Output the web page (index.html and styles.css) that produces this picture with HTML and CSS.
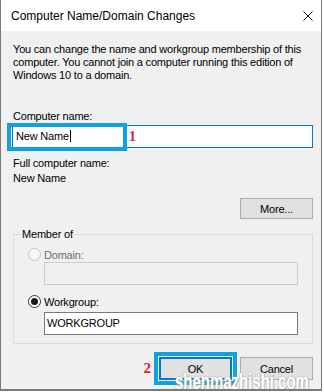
FILE: index.html
```html
<!DOCTYPE html>
<html lang="en">
<head>
    <meta charset="UTF-8">
    <title>Computer Name/Domain Changes</title>
    <link rel="stylesheet" href="styles.css">
</head>
<body>

    <div class="dialog">
        <div class="titlebar">
            <span class="title">Computer Name/Domain Changes</span>
            <svg class="close" width="10" height="10" viewBox="0 0 10 10">
                <path d="M0.5 0.5 L9.5 9.5 M9.5 0.5 L0.5 9.5" stroke="#111" stroke-width="1" fill="none"/>
            </svg>
        </div>

        <div class="content">
            <p class="intro">You can change the name and workgroup membership of this computer. You cannot join a computer running this edition of Windows 10 to a domain.</p>

            <div class="field-label">Computer name:</div>
            <div class="name-field">
                <div class="textbox active">New Name<span class="caret"></span></div>
                <span class="mark mark-name"></span>
                <span class="step step-1">1</span>
            </div>

            <div class="info-label">Full computer name:</div>
            <div class="info-value">New Name</div>

            <div class="more-row">
                <button class="btn">More...</button>
            </div>

            <fieldset class="member">
                <legend>Member of</legend>
                <div class="group-body">
                    <div class="radio-row disabled"><span class="radio"></span>Domain:</div>
                    <div class="textbox sub off"></div>
                    <div class="radio-row workgroup"><span class="radio checked"></span>Workgroup:</div>
                    <div class="textbox sub">WORKGROUP</div>
                </div>
            </fieldset>

            <div class="actions">
                <span class="step step-2">2</span>
                <button class="btn default">OK</button>
                <button class="btn">Cancel</button>
            </div>
        </div>

        <div class="watermark">shenmazhishi.com</div>
    </div>

</body>
</html>
```

FILE: styles.css
```css
body {
    margin: 0;
    background: #fff;
    font-family: "Liberation Sans", Arial, sans-serif;
    font-size: 12px;
    color: #000;
}

.dialog {
    position: relative;
    box-sizing: border-box;
    width: 322px;
    height: 391px;
    background: #f0f0f0;
    border: 1px solid #7a7a7a;
    border-top: none;
    border-bottom-width: 2px;
    overflow: hidden;
}

.titlebar {
    height: 31px;
    background: #fff;
    display: flex;
    align-items: center;
    padding: 0 8px 0 10px;
}

.title {
    line-height: 14px;
}

.close {
    margin-left: auto;
}

.content {
    padding: 0 8px 0 11px;
    font-size: 11px;
    letter-spacing: -0.2px;
}

.intro {
    margin: 12px 0 0 1px;
    line-height: 13px;
}

.field-label {
    margin: 28px 0 0 1px;
    line-height: 13px;
}

.name-field {
    position: relative;
    margin-top: 2px;
}

.textbox {
    box-sizing: border-box;
    height: 23px;
    line-height: 21px;
    background: #fff;
    border: 1px solid #7a7a7a;
    padding: 0 3px;
    white-space: nowrap;
}

.textbox.active {
    border-color: #0078d7;
}

.caret {
    display: inline-block;
    width: 1px;
    height: 12px;
    margin-left: 1px;
    background: #000;
    vertical-align: -2px;
}

.mark {
    position: absolute;
    border: 4px solid #12a0e3;
}

.mark-name {
    left: -5px;
    top: -2px;
    width: 112px;
    height: 20px;
}

.step {
    font-family: "Liberation Serif", "Times New Roman", serif;
    font-weight: bold;
    color: #e3202a;
    letter-spacing: 0;
}

.step-1 {
    position: absolute;
    left: 117px;
    top: 5px;
    font-size: 14px;
    line-height: 14px;
}

.info-label {
    margin: 9px 0 0 1px;
    line-height: 13px;
}

.info-value {
    margin: 2px 0 0 1px;
    line-height: 13px;
}

.more-row {
    display: flex;
    justify-content: flex-end;
    margin-top: 13px;
}

.btn {
    box-sizing: border-box;
    width: 73px;
    height: 21px;
    padding: 0;
    background: #e1e1e1;
    border: 1px solid #adadad;
    font-family: inherit;
    font-size: 11px;
    letter-spacing: -0.2px;
    color: #000;
}

.member {
    margin: 9px 0 0 1px;
    padding: 0 0 8px 0;
    border: 1px solid #dcdcdc;
    min-width: 0;
}

.member legend {
    margin-left: 7px;
    padding: 0 1px;
    line-height: 13px;
}

.group-body {
    padding-left: 14px;
}

.radio-row {
    display: flex;
    align-items: center;
    gap: 3px;
    height: 13px;
    margin-top: 7px;
}

.radio-row.workgroup {
    margin-top: 10px;
}

.radio-row.disabled {
    color: #6d6d6d;
}

.radio {
    box-sizing: border-box;
    width: 13px;
    height: 13px;
    border-radius: 50%;
    border: 1px solid #333;
    background: #fff;
    display: flex;
    align-items: center;
    justify-content: center;
}

.radio-row.disabled .radio {
    border-color: #c2c2c2;
    background: #f7f7f7;
}

.radio.checked::after {
    content: "";
    width: 7px;
    height: 7px;
    border-radius: 50%;
    background: #1a1a1a;
}

.textbox.sub {
    width: 254px;
    margin: 4px 0 0 16px;
    padding: 0 2px;
}

.textbox.off {
    margin-top: 1px;
    border-color: #cccccc;
    background: #f0f0f0;
}

.actions {
    display: flex;
    justify-content: flex-end;
    align-items: center;
    gap: 8px;
    margin-top: 13px;
}

.actions .btn {
    height: 23px;
}

.btn.default {
    border: 2px solid #0078d7;
    outline: 4px solid #12a0e3;
    outline-offset: 1px;
}

.step-2 {
    font-size: 15px;
    line-height: 15px;
}

.watermark {
    position: absolute;
    left: 174px;
    bottom: -6px;
    font-size: 22px;
    font-weight: bold;
    color: #fff;
    text-shadow: 0 0 2px #9a9a9a, 1px 1px 1px #b0b0b0;
    transform: scaleX(0.68);
    transform-origin: left bottom;
    white-space: nowrap;
}
```
